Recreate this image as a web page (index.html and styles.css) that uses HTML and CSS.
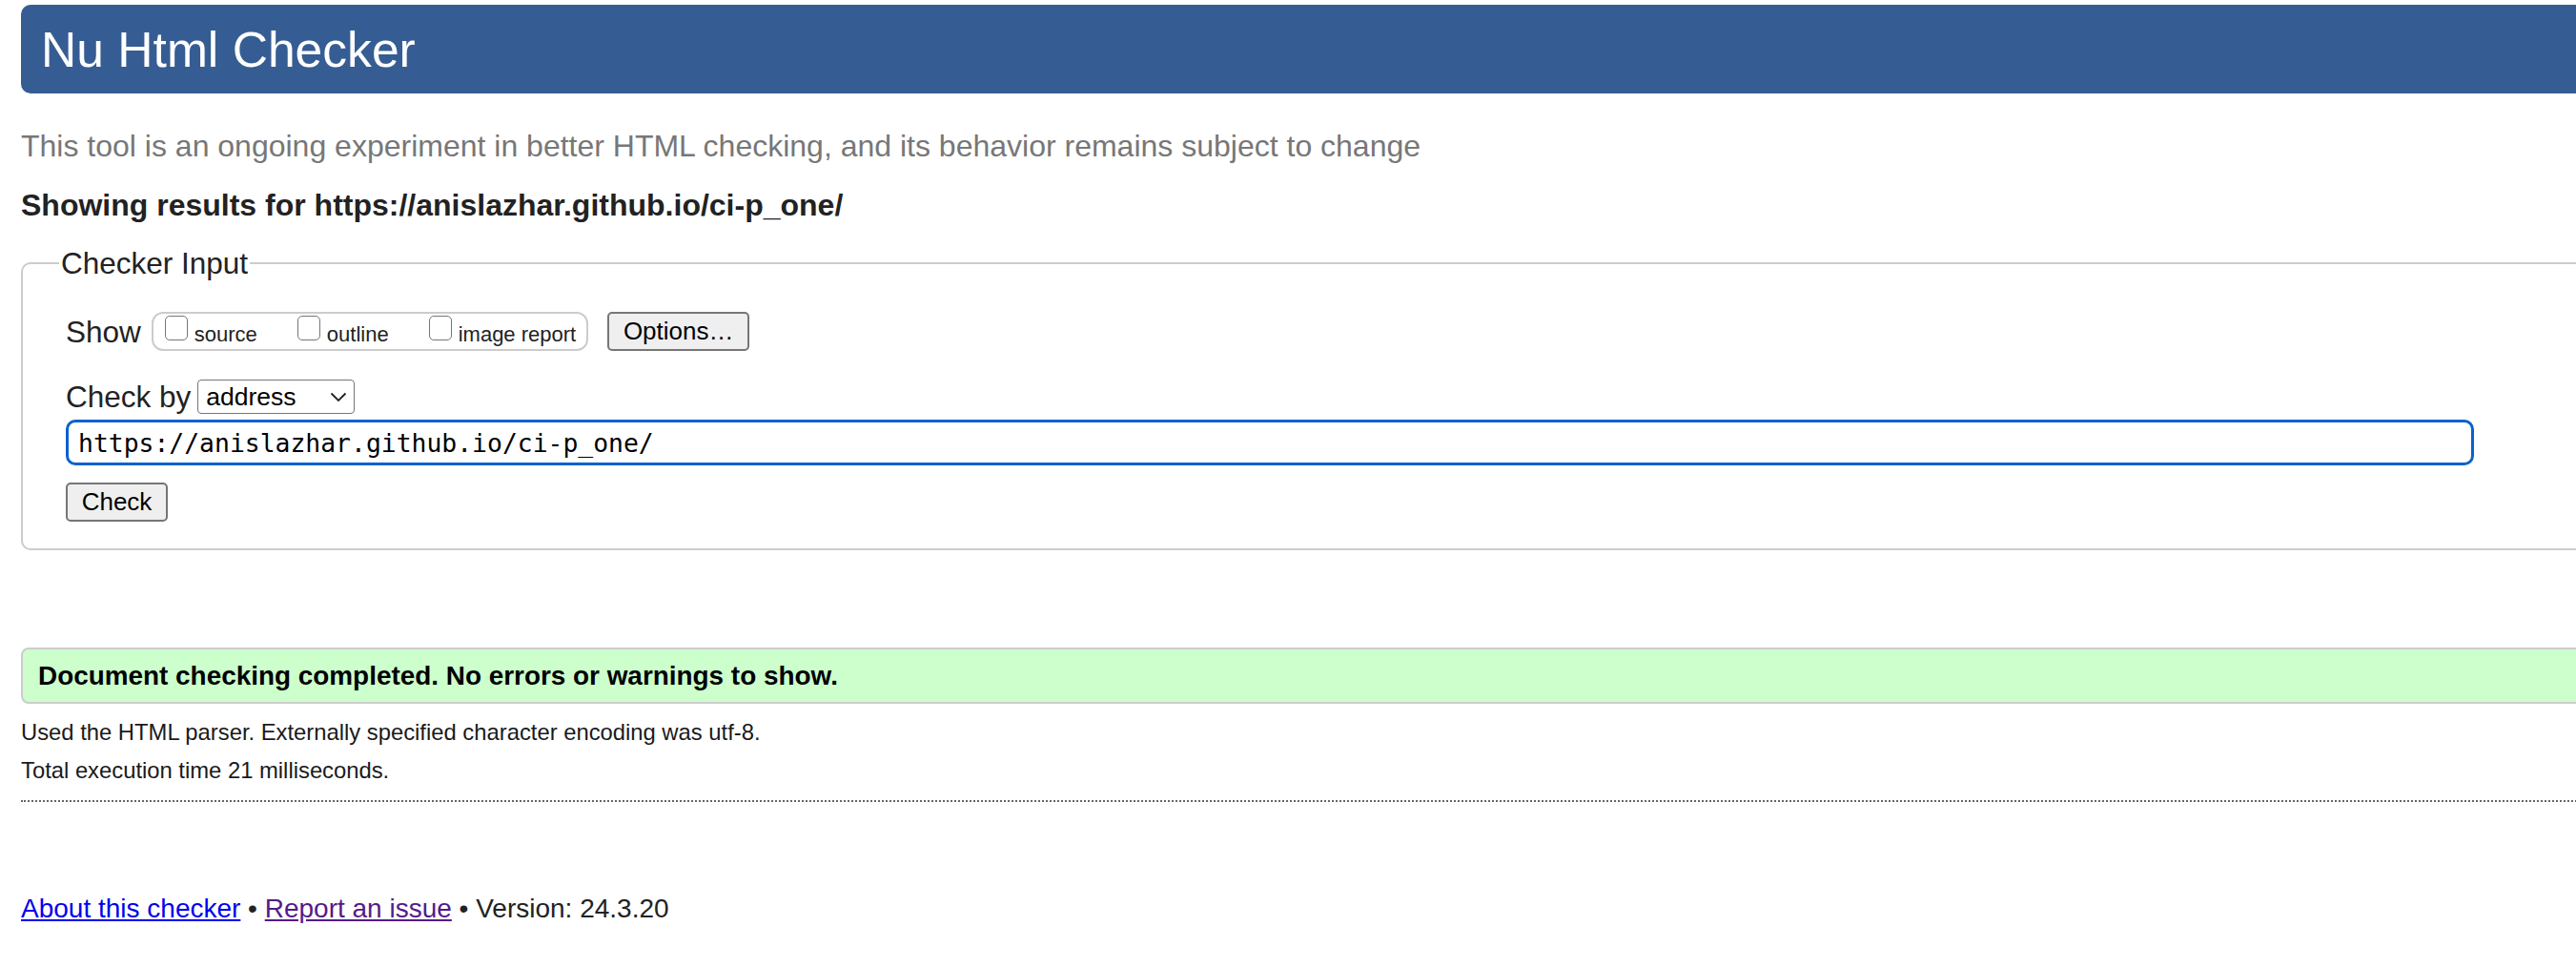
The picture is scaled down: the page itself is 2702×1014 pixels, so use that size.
FILE: index.html
```html
<!DOCTYPE html>
<html lang="en">
<head>
<meta charset="utf-8">
<title>Nu Html Checker</title>
<link rel="stylesheet" href="styles.css">
</head>
<body>
<div class="page">
  <h1 class="banner">Nu Html Checker</h1>
  <p class="tagline">This tool is an ongoing experiment in better HTML checking, and its behavior remains subject to change</p>
  <h2 class="results">Showing results for https://anislazhar.github.io/ci-p_one/</h2>
  <form class="checker">
    <fieldset class="input-box">
      <legend class="input-legend">Checker Input</legend>
      <div class="show-row">
        <span class="row-label">Show</span>
        <span class="check-group">
          <label class="check-item"><input type="checkbox" class="check-box"><span>source</span></label>
          <label class="check-item"><input type="checkbox" class="check-box"><span>outline</span></label>
          <label class="check-item"><input type="checkbox" class="check-box"><span>image report</span></label>
        </span>
        <button type="button" class="btn btn-options">Options…</button>
      </div>
      <div class="by-row">
        <span class="row-label">Check by</span>
        <span class="select-wrap">
          <select class="by-select"><option>address</option></select>
          <svg class="chevron" width="18" height="11" viewBox="0 0 18 11"><path d="M1.5 1.5 L9 9 L16.5 1.5" fill="none" stroke="#222" stroke-width="1.8"/></svg>
        </span>
      </div>
      <input class="url-input" type="text" value="https://anislazhar.github.io/ci-p_one/">
      <div class="submit-row"><button type="button" class="btn btn-check">Check</button></div>
    </fieldset>
  </form>
  <p class="success">Document checking completed. No errors or warnings to show.</p>
  <p class="details">Used the HTML parser. Externally specified character encoding was utf-8.</p>
  <p class="details details-time">Total execution time 21 milliseconds.</p>
  <hr class="divider">
  <p class="footer"><a href="#about" class="link">About this checker</a> • <a href="#issue" class="link link-visited">Report an issue</a> • Version: 24.3.20</p>
</div>
</body>
</html>
```
FILE: styles.css
```css
html {
  overflow: hidden;
}
body {
  margin: 0;
  background: #fff;
  font-family: "Liberation Sans", Arial, Helvetica, sans-serif;
  color: #222;
}
.page {
  padding-left: 22px;
  margin-right: -60px;
}
.banner {
  margin: 5px 0 0;
  height: 93px;
  display: flex;
  align-items: center;
  padding-left: 21px;
  background: #365d93;
  color: #fff;
  font-size: 51.6px;
  font-weight: normal;
  border-radius: 10px;
}
.tagline {
  margin: 35px 0 0;
  font-size: 32px;
  line-height: 40px;
  color: #777;
}
.results {
  margin: 22px 0 0;
  font-size: 32px;
  line-height: 40px;
  font-weight: bold;
  color: #222;
}
.checker {
  margin: 24px 0 0;
}
.input-box {
  margin: 0;
  border: 2px solid #ccc;
  border-radius: 10px;
  padding: 0 0 28px 45px;
  min-width: 0;
}
.input-legend {
  font-size: 31.5px;
  line-height: 34px;
  padding: 0 2px;
  margin-left: -7px;
  color: #222;
}
.show-row {
  margin-top: 34px;
  display: flex;
  align-items: center;
  height: 41px;
}
.row-label {
  font-size: 31.5px;
  line-height: 36px;
  color: #222;
}
.check-group {
  margin-left: 11px;
  display: flex;
  align-items: stretch;
  height: 35px;
  padding: 0 11px 2px 12px;
  border: 2px solid #ccc;
  border-radius: 12px;
}
.check-item {
  display: flex;
  align-items: flex-end;
  font-size: 22px;
  line-height: 26px;
  color: #222;
}
.check-item + .check-item {
  margin-left: 42px;
}
.check-box {
  appearance: none;
  -webkit-appearance: none;
  margin: 0 7px 7px 0;
  width: 24px;
  height: 26px;
  border: 1.5px solid #767676;
  border-radius: 5px;
  background: #fff;
  align-self: flex-end;
}
.btn {
  font-family: "Liberation Sans", Arial, Helvetica, sans-serif;
  font-size: 26px;
  color: #000;
  background: #efefef;
  border: 2px solid #767676;
  border-radius: 5px;
  height: 41px;
  padding: 0;
}
.btn-options {
  margin-left: 20px;
  width: 149px;
}
.by-row {
  margin-top: 30px;
  display: flex;
  align-items: center;
  height: 36px;
}
.select-wrap {
  position: relative;
  margin-left: 7px;
  display: inline-flex;
}
.by-select {
  appearance: none;
  -webkit-appearance: none;
  width: 165px;
  height: 36px;
  border: 1.5px solid #767676;
  border-radius: 4px;
  background: #fff;
  color: #000;
  font-family: "Liberation Sans", Arial, Helvetica, sans-serif;
  font-size: 26.5px;
  padding: 0 0 0 8px;
}
.chevron {
  position: absolute;
  right: 8px;
  top: 13px;
  pointer-events: none;
}
.url-input {
  display: block;
  box-sizing: border-box;
  margin-top: 6px;
  width: 2526px;
  height: 48px;
  border: 3px solid #0a62cc;
  border-radius: 10px;
  padding: 0 10px;
  font-family: "DejaVu Sans Mono", "Liberation Mono", monospace;
  font-size: 26.4px;
  color: #000;
  outline: none;
}
.submit-row {
  margin-top: 18px;
}
.btn-check {
  width: 107px;
}
.success {
  margin: 102px 0 0;
  box-sizing: border-box;
  height: 59px;
  line-height: 55px;
  padding-left: 16px;
  background: #ccffcc;
  border: 2px solid #ccc;
  border-radius: 8px;
  font-size: 27.9px;
  font-weight: bold;
  color: #000;
}
.details {
  margin: 15px 0 0;
  font-size: 23.8px;
  line-height: 30px;
  color: #1a1a1a;
}
.details-time {
  margin-top: 10px;
}
.divider {
  margin: 16px 0 0;
  border: 0;
  border-top: 2px dotted #666;
  height: 0;
}
.footer {
  margin: 95px 0 0;
  font-size: 28px;
  line-height: 34px;
  color: #222;
}
.link {
  color: #0000ee;
}
.link-visited {
  color: #551a8b;
}
```
